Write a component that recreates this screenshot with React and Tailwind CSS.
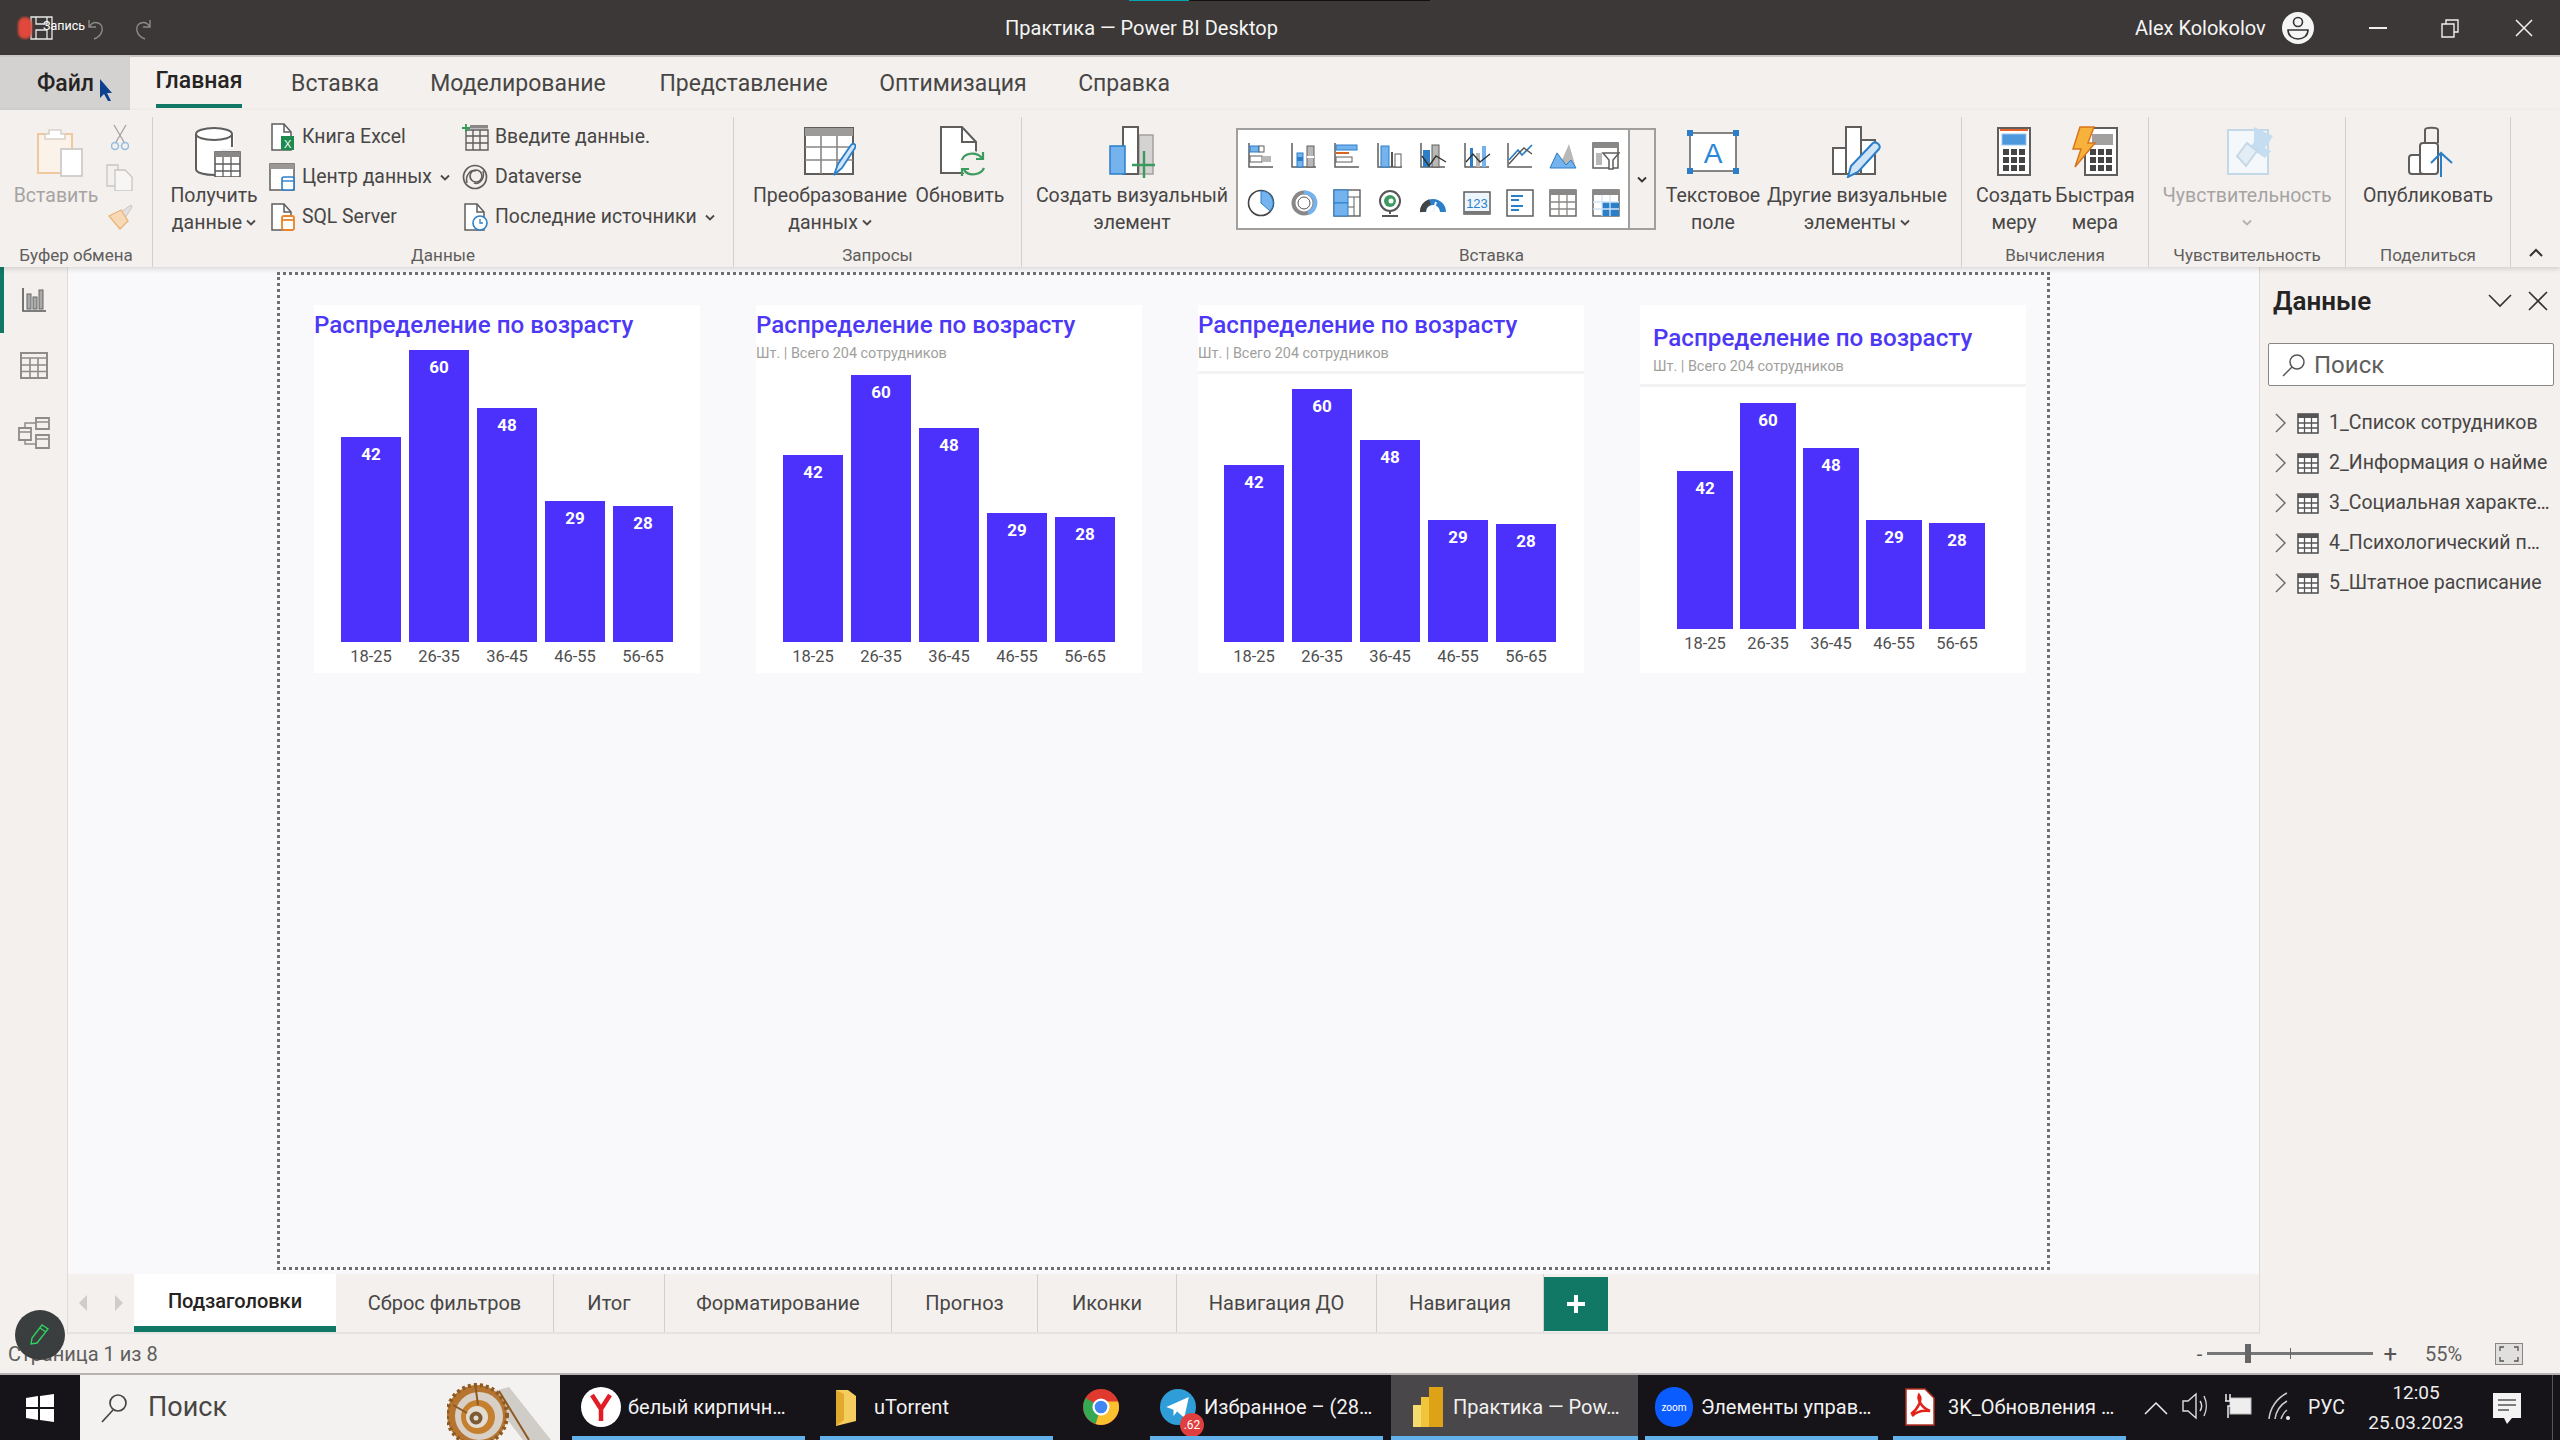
import React from "react";

const S = ({ w, h, vb, className = "", children }) => (
  <svg width={w} height={h} viewBox={vb || `0 0 ${w} ${h}`} fill="none" className={`shrink-0 ${className}`}>{children}</svg>
);
const G = "#5f5e5d", B = "#2b7fc9", L = "#74b3ee", A = "#b9b8b7";

const Chev = ({ c = "#4a4a4a", className = "" }) => (
  <S w={10} h={7} className={className}><path d="M1 1.5L5 5.5L9 1.5" stroke={c} strokeWidth="1.8" /></S>
);

/* small ribbon icons */
const FileBase = ({ children }) => (
  <S w={26} h={28}>
    <path d="M3 1H15L22 9V27H3Z" fill="#fff" stroke={G} strokeWidth="1.5" />
    <path d="M15 1V9H22" stroke={G} strokeWidth="1.5" />
    {children}
  </S>
);
const ExcelIcon = () => <FileBase><rect x="12" y="13" width="13" height="14" fill="#1d8a4e" /><text x="15" y="25" fontSize="11" fill="#fff" fontFamily="Liberation Sans">X</text></FileBase>;
const SqlIcon = () => <FileBase><rect x="13" y="13" width="12" height="14" rx="2" fill="#fff" stroke="#e8832a" strokeWidth="1.8" /><path d="M13 17H25" stroke="#e8832a" strokeWidth="1.8" /></FileBase>;
const RecentIcon = () => <FileBase><circle cx="18" cy="20" r="7" fill="#fff" stroke={B} strokeWidth="1.6" /><path d="M18 16V20H21" stroke={B} strokeWidth="1.3" /></FileBase>;
const HubIcon = () => (
  <S w={27} h={28}>
    <rect x="1" y="1" width="24" height="26" fill="#fff" stroke={G} strokeWidth="1.5" />
    <rect x="1" y="1" width="24" height="5" fill="#9a9896" />
    <rect x="13" y="14" width="12" height="13" rx="2" fill="#fff" stroke={B} strokeWidth="1.6" />
    <path d="M13 18H25" stroke={B} strokeWidth="1.4" />
  </S>
);
const EnterIcon = () => (
  <S w={27} h={27}>
    <path d="M4 6H26V26H4Z M4 12H26 M4 19H26 M11 6V26 M18 6V26" stroke={G} strokeWidth="1.4" />
    <rect x="8" y="1" width="18" height="3.5" fill="#8a8886" />
    <path d="M4 0V8M0 4H8" stroke="#2f9e57" strokeWidth="1.8" />
  </S>
);
const DataverseIcon = () => (
  <S w={26} h={26}>
    <circle cx="13" cy="13" r="11.5" stroke={G} strokeWidth="1.7" />
    <circle cx="14" cy="12" r="6" stroke={G} strokeWidth="1.7" />
    <path d="M5 19C3 12 8 5 14 7M21 7C23 14 18 21 12 19" stroke={G} strokeWidth="1.5" />
  </S>
);

/* large ribbon icons */
const Clipboard = () => (
  <S w={46} h={50}>
    <rect x="1" y="7" width="34" height="39" fill="#fbf3ea" stroke="#f0c89e" strokeWidth="2" />
    <path d="M12 7V3H24V7H28V12H8V7Z" fill="#fff" stroke="#d8d2cc" strokeWidth="1.6" />
    <rect x="24" y="22" width="21" height="27" fill="#fff" stroke="#c8c6c4" strokeWidth="1.6" />
  </S>
);
const GetData = () => (
  <S w={46} h={50}>
    <path d="M1 7V42C1 47 11 49 20 49H26V22H39V7" fill="#fff" />
    <path d="M1 7V42C1 46 10 48 20 48M37 7V20" stroke={G} strokeWidth="2" />
    <ellipse cx="19" cy="7" rx="18" ry="6" fill="#fff" stroke={G} strokeWidth="2" />
    <rect x="20" y="25" width="25" height="25" fill="#fff" stroke={G} strokeWidth="1.6" />
    <rect x="20" y="25" width="25" height="5" fill="#8a8886" />
    <path d="M20 37H45M20 44H45M28 30V50M36 30V50" stroke={G} strokeWidth="1.3" />
  </S>
);
const Transform = () => (
  <S w={52} h={50}>
    <rect x="1" y="1" width="48" height="46" fill="#fff" stroke={G} strokeWidth="2" />
    <rect x="1" y="1" width="48" height="8" fill="#9d9b99" />
    <path d="M1 20H49M1 33H49M17 9V47M33 9V47" stroke="#8a8886" strokeWidth="1.6" />
    <path d="M30 48L34 37L47 18C49 15 53 18 51 21L38 41Z" fill="#cfe4f7" stroke={B} strokeWidth="1.8" />
  </S>
);
const Refresh = () => (
  <S w={46} h={52}>
    <path d="M1 1H22L36 16V47H1Z" fill="#fff" stroke={G} strokeWidth="2" />
    <path d="M22 1V16H36" stroke={G} strokeWidth="2" />
    <circle cx="33" cy="38" r="13" fill="#f3f0ee" />
    <path d="M22 34C24 27 36 25 42 32M44 42C41 49 29 51 24 44" stroke="#3c9a5f" strokeWidth="2.2" />
    <path d="M43 26V33H36M22 50V43H29" stroke="#3c9a5f" strokeWidth="2.2" />
  </S>
);
const NewVisual = () => (
  <S w={46} h={52}>
    <rect x="30" y="9" width="14" height="39" fill="#d5d3d1" stroke="#a3a19f" strokeWidth="1.5" />
    <rect x="14" y="1" width="15" height="47" fill="#fff" stroke={G} strokeWidth="2" />
    <rect x="1" y="20" width="15" height="28" fill="#74b3ee" stroke={B} strokeWidth="1.5" />
    <path d="M35 25V52M23 39H48" stroke="#3c9a5f" strokeWidth="2.4" />
  </S>
);
const TextBox = () => (
  <S w={52} h={44}>
    <rect x="3" y="3" width="46" height="38" fill="#fff" stroke="#5f5e5d" strokeWidth="1.5" />
    {[[3, 3], [49, 3], [3, 41], [49, 41]].map(([x, y], i) => <rect key={i} x={x - 3} y={y - 3} width="6" height="6" fill={B} />)}
    <text x="26" y="33" textAnchor="middle" fontSize="28" fill="#2b88d8" fontFamily="Liberation Sans">A</text>
  </S>
);
const MoreVisuals = () => (
  <S w={50} h={52}>
    <rect x="1" y="22" width="15" height="26" fill="#fff" stroke={G} strokeWidth="2" />
    <rect x="14" y="1" width="15" height="47" fill="#fff" stroke={G} strokeWidth="2" />
    <rect x="29" y="14" width="14" height="34" fill="#fff" stroke={G} strokeWidth="2" />
    <path d="M16 51L19 40L40 18C43 14 50 19 47 23L26 46Z" fill="#cfe4f7" stroke={B} strokeWidth="2" />
  </S>
);
const Calc = ({ top = "#4c98dd" }) => (
  <S w={34} h={50}>
    <rect x="1" y="1" width="32" height="47" fill="#fff" stroke={G} strokeWidth="2" />
    <rect x="3" y="2" width="28" height="2" fill="#e8612a" />
    <rect x="5" y="7" width="24" height="11" fill={top} stroke="#9bc7ee" />
    {[22, 30, 38].map((y) => [6, 14, 22].map((x) => <rect key={x + "-" + y} x={x} y={y} width="6" height="6" fill="#444" />))}
  </S>
);
const Quick = () => (
  <S w={46} h={52}>
    <g transform="translate(12 1)"><rect x="1" y="1" width="32" height="47" fill="#fff" stroke={G} strokeWidth="2" />
      <rect x="8" y="7" width="21" height="11" fill="#a3a19f" />
      {[22, 30, 38].map((y) => [6, 14, 22].map((x) => <rect key={x + "-" + y} x={x} y={y} width="6" height="6" fill="#444" />))}</g>
    <path d="M8 1H22L16 17H23L3 41L9 23H1Z" fill="#f7b23b" stroke="#d9741e" strokeWidth="1.5" />
  </S>
);
const Sens = () => (
  <S w={48} h={52}>
    <rect x="1" y="4" width="40" height="44" fill="#f5f8fa" stroke="#c4d8e6" strokeWidth="2" />
    <path d="M27 1L46 10L38 22L44 25L38 32L23 22L27 16Z" fill="#c4ddf0" />
    <path d="M10 30L20 17L30 25L19 40Z" fill="#e2edf5" stroke="#c4d8e6" strokeWidth="2" />
  </S>
);
const Publish = () => (
  <S w={48} h={52}>
    <rect x="2" y="29" width="16" height="19" rx="3" fill="#fff" stroke={G} strokeWidth="2" />
    <rect x="13" y="17" width="18" height="31" rx="3" fill="#fff" stroke={G} strokeWidth="2" />
    <path d="M18 17V4C18 1 31 1 31 4V17" stroke={G} strokeWidth="2" />
    <path d="M34 51V28M24 37L34 27L45 37" stroke="#2b7fc9" strokeWidth="2" />
  </S>
);

/* gallery */
const Ax = () => <path d="M2 1V25H26" stroke={G} strokeWidth="1.5" />;
const GI = ({ children }) => <S w={28} h={28} vb="0 0 28 28">{children}</S>;
const gallery = [
  <GI key="1"><Ax /><rect x="3" y="4" width="9" height="6" fill={L} stroke={B} /><rect x="12" y="4" width="5" height="6" fill="#fff" stroke={G} /><rect x="3" y="14" width="12" height="6" fill="#fff" stroke={G} /><rect x="15" y="14" width="9" height="6" fill={A} /></GI>,
  <GI key="2"><Ax /><rect x="7" y="11" width="6" height="14" fill={L} stroke={B} /><rect x="7" y="15" width="6" height="4" fill={B} /><rect x="17" y="4" width="7" height="21" fill={A} stroke={G} /><rect x="17" y="14" width="7" height="2" fill="#fff" /></GI>,
  <GI key="3"><Ax /><rect x="3" y="3" width="21" height="5" fill={L} stroke={B} /><rect x="3" y="10" width="13" height="2" fill="#d9641f" /><rect x="3" y="15" width="16" height="5" fill="#fff" stroke={G} /></GI>,
  <GI key="4"><Ax /><rect x="5" y="4" width="8" height="21" fill={L} stroke={B} /><rect x="15" y="10" width="2" height="15" fill="#555" /><rect x="19" y="12" width="6" height="13" fill="#fff" stroke={G} /></GI>,
  <GI key="5"><Ax /><rect x="4" y="8" width="7" height="17" fill={B} /><rect x="13" y="3" width="7" height="22" fill={A} stroke={G} /><path d="M3 14L10 24L17 14L27 20" stroke="#333" strokeWidth="1.4" /></GI>,
  <GI key="6"><Ax /><rect x="7" y="6" width="3" height="19" fill={B} /><rect x="13" y="11" width="4" height="14" fill={A} /><rect x="19" y="4" width="4" height="21" fill={L} /><path d="M3 20L10 12L17 20L27 12" stroke="#333" strokeWidth="1.4" /></GI>,
  <GI key="7"><Ax /><path d="M3 18L12 8L16 13L26 3" stroke={B} strokeWidth="1.7" /><path d="M3 22L11 13L18 6L26 12" stroke="#555" strokeWidth="1.4" /></GI>,
  <GI key="8"><path d="M1 26L8 10L13 18L20 2L27 26Z" fill={A} /><path d="M1 26L8 11L17 23L22 18L27 26Z" fill={L} stroke={B} /></GI>,
  <GI key="9"><rect x="1" y="1" width="25" height="25" fill="#fff" stroke={G} strokeWidth="1.5" /><rect x="1" y="1" width="25" height="5" fill="#8a8886" /><rect x="4" y="11" width="6" height="12" fill={A} /><path d="M11 11H27L21 18V27L17 27V18Z" fill="#fff" stroke={G} strokeWidth="1.5" /></GI>,
  <GI key="10"><circle cx="14" cy="14" r="12.5" fill="#fff" stroke="#444" strokeWidth="1.6" /><path d="M14 2A12 12 0 0 1 23 22L14 14Z" fill={L} stroke={B} /></GI>,
  <GI key="11"><circle cx="14" cy="14" r="10.5" stroke="#8a8886" strokeWidth="4" /><path d="M14 3.5A10.5 10.5 0 0 1 18 24" stroke={L} strokeWidth="4" /><circle cx="14" cy="14" r="6" fill="#fff" stroke="#555" /></GI>,
  <GI key="12"><rect x="1" y="1" width="26" height="26" fill="#fff" stroke={G} strokeWidth="1.4" /><rect x="1" y="1" width="14" height="13" fill={L} stroke={B} /><rect x="1" y="14" width="14" height="13" fill={L} stroke={B} /><path d="M15 8H27M21 8V27M15 18H21" stroke={G} /></GI>,
  <GI key="13"><circle cx="14" cy="12" r="10" fill="#fff" stroke="#555" strokeWidth="2" /><circle cx="14" cy="12" r="6" fill="#3c9a5f" /><circle cx="15" cy="12" r="2.5" fill="#fff" /><path d="M14 22V25M6 27H22" stroke="#555" strokeWidth="2" /></GI>,
  <GI key="14"><path d="M4 23A10 10 0 0 1 24 23" stroke={B} strokeWidth="6" /><path d="M4 23A10 10 0 0 1 11 13" stroke="#444" strokeWidth="6" /><path d="M14 23L17 13" stroke="#f3f3f3" strokeWidth="2" /></GI>,
  <GI key="15"><rect x="1" y="3" width="26" height="22" fill="#eef6fd" stroke={G} strokeWidth="1.5" /><rect x="1" y="22" width="26" height="3" fill="#777" /><text x="14" y="19" textAnchor="middle" fontSize="13" fill={B} fontFamily="Liberation Sans">123</text></GI>,
  <GI key="16"><rect x="1" y="1" width="26" height="26" fill="#fff" stroke={G} strokeWidth="1.5" /><path d="M5 7H17M5 11H13M5 17H17M5 21H13" stroke={B} strokeWidth="2" /></GI>,
  <GI key="17"><rect x="1" y="1" width="26" height="26" fill="#fff" stroke={G} strokeWidth="1.4" /><rect x="1" y="1" width="26" height="5" fill="#8a8886" /><path d="M1 13H27M1 20H27M10 6V27M18 6V27" stroke="#8a8886" strokeWidth="1.3" /></GI>,
  <GI key="18"><rect x="1" y="1" width="26" height="26" fill="#fff" stroke={G} strokeWidth="1.4" /><rect x="1" y="1" width="26" height="5" fill="#8a8886" /><rect x="10" y="13" width="17" height="14" fill={B} /><path d="M1 13H27M1 20H27M10 6V27M18 6V27" stroke="#cfe4f7" strokeWidth="1.3" /></GI>,
];

const Large = ({ icon, lines, w, chev, gray, extraChev, iconPl = "" }) => (
  <div className={`flex flex-col items-center ${w}`}>
    <div className={`h-[50px] flex items-center justify-center ${iconPl}`}>{icon}</div>
    <div className={`mt-[5px] text-[19.5px] leading-[27px] text-center whitespace-nowrap ${gray ? "text-[#a6a4a2]" : "text-[#484644]"}`}>
      {lines.map((l, i) => (
        <div key={i} className="flex items-center justify-center gap-[4px] h-[27px]">
          {l}{chev && i === lines.length - 1 && <Chev />}
        </div>
      ))}
      {extraChev && <div className="flex items-center justify-center h-[27px]"><Chev c="#b5b3b1" /></div>}
    </div>
  </div>
);

const Group = ({ label, w, children }) => (
  <div className={`${w} h-[150px] flex flex-col shrink-0 border-r border-[#d2d0ce]`}>
    <div className="flex-1 flex items-start pt-[10px]">{children}</div>
    <div className="h-[24px] leading-[24px] text-center text-[17px] text-[#5f5d5b] whitespace-nowrap">{label}</div>
  </div>
);

const SmallBtn = ({ icon, label, chev }) => (
  <div className="flex items-center h-[40px] whitespace-nowrap text-[19.4px] text-[#484644]">
    <div className="w-[33px] flex justify-start">{icon}</div>
    <span>{label}</span>
    {chev && <Chev className="ml-[8px]" />}
  </div>
);

const Chart = ({ unit, barW, gap, pl, label }) => {
  const data = [["18-25", 42], ["26-35", 60], ["36-45", 48], ["46-55", 29], ["56-65", 28]];
  return (
    <div className={`flex items-end ${pl} ${gap}`}>
      {data.map(([k, v]) => (
        <div key={k} className={`${barW} flex flex-col items-center`}>
          <div className="w-full bg-[#4c31fd] text-white text-[17px] font-bold text-center leading-[24px] pt-[5px]" style={{ height: Math.round(v * unit) }}>{v}</div>
          <div className={`${label} whitespace-nowrap text-[16.5px] text-[#505050] flex items-center`}>{k}</div>
        </div>
      ))}
    </div>
  );
};

const Card = ({ sub, sep = "", topPad, titlePl = "", chart, bottomPad = "" }) => (
  <div className={`w-[386px] h-[368px] bg-white flex flex-col justify-between shrink-0 ${bottomPad}`}>
    <div className={`${topPad} ${titlePl} ${sep}`}>
      <div className="text-[#4d38f5] text-[24.2px] font-medium leading-[30px] whitespace-nowrap">Распределение по возрасту</div>
      {sub && <div className="text-[#a19f9d] text-[14.4px] leading-[20px] mt-[4px] whitespace-nowrap">Шт. | Всего 204 сотрудников</div>}
    </div>
    {chart}
  </div>
);

const Tab = ({ children, active, w }) => (
  <div className={`${w} shrink-0 h-full flex items-center justify-center text-[20px] whitespace-nowrap ${active ? "bg-white text-[#252423] font-medium border-b-[6px] border-[#117865] pt-[2px]" : "text-[#484644] border-r border-[#d2d0ce]"}`}>{children}</div>
);

const TableGlyph = () => (
  <S w={22} h={21}>
    <rect x="1" y="1" width="20" height="19" fill="#fff" stroke="#555" strokeWidth="1.6" />
    <rect x="1" y="1" width="20" height="4" fill="#555" />
    <path d="M1 10H21M1 15H21M7.5 5V20M14.5 5V20" stroke="#555" strokeWidth="1.3" />
  </S>
);

const TaskItem = ({ w, icon, label, active, line = true, ml, iconW = "w-[38px]" }) => (
  <div className={`${w} ${ml} shrink-0 h-full relative flex items-center pb-[1px] text-[20px] text-[#f2f2f2] whitespace-nowrap ${active ? "bg-[#4a474a]" : ""}`}>
    <div className={`${iconW} flex justify-center shrink-0`}>{icon}</div>
    {label && <span className="ml-[8px]">{label}</span>}
    {line && <div className="absolute left-0 right-0 bottom-0 h-[4px] bg-[#63b1ea]" />}
  </div>
);

const Shell = () => (
  <S w={108} h={65} vb="0 0 108 65">
    <path d="M40 18L76 65H104L62 12Z" fill="#d0cdc8" />
    <circle cx="30" cy="40" r="30" fill="#b5742f" stroke="#8d5a22" strokeWidth="4" strokeDasharray="3 3" />
    <circle cx="32" cy="41" r="24" fill="#d8d0c6" />
    <circle cx="31" cy="42" r="17" fill="#c4802f" />
    <circle cx="30" cy="42" r="11" fill="#e3dcd2" />
    <circle cx="29" cy="43" r="6.5" fill="#7c5a34" />
    <circle cx="29" cy="43" r="2.5" fill="#e3dcd2" />
    <path d="M52 16L82 65M28 8L31 30M6 30L20 38" stroke="#8d5a22" strokeWidth="2" />
  </S>
);

const tables = ["1_Список сотрудников", "2_Информация о найме", "3_Социальная характе…", "4_Психологический п…", "5_Штатное расписание"];

export default function App() {
  return (
    <div className="w-[2560px] h-[1440px] overflow-hidden flex flex-col relative bg-[#f3f0ee] font-['Roboto',sans-serif]">
      {/* title bar */}
      <div className="h-[57px] shrink-0 bg-[#3b3837] border-b-2 border-[#c9c7c5] flex items-center text-[#f5f5f5] relative">
        <div className="w-[14px] h-[22px] rounded-full bg-[#e0483c] ml-[18px] blur-[1px]" />
        <S w={26} h={26} className="-ml-[4px]"><path d="M3 2H24V24H3Z M8 24V15H19V24 M8 2V9H19V2" stroke="#e8e8e8" strokeWidth="1.3" /></S>
        <span className="absolute left-[43px] top-[17px] text-[12.5px] text-white">Запись</span>
        <S w={20} h={26} className="ml-[32px]"><path d="M3 5V12H10M3 12C8 4 18 8 16 16C15 20 11 23 8 24" stroke="#8d8b8a" strokeWidth="1.4" /></S>
        <S w={20} h={26} className="ml-[27px]"><path d="M17 5V12H10M17 12C12 4 2 8 4 16C5 20 9 23 12 24" stroke="#8d8b8a" strokeWidth="1.4" /></S>
        <div className="ml-[852px] text-[20px] whitespace-nowrap w-[1130px]">Практика — Power BI Desktop</div>
        <span className="text-[20px] whitespace-nowrap w-[146px]">Alex Kolokolov</span>
        <S w={34} h={34}><circle cx="17" cy="17" r="16" fill="#f5f5f5" /><circle cx="17" cy="11" r="4.5" stroke="#333" strokeWidth="1.6" /><path d="M7 19H27C27 31 7 31 7 19Z" stroke="#333" strokeWidth="1.6" /></S>
        <S w={18} h={4} className="ml-[54px]"><rect width="18" height="2" y="1" fill="#eee" /></S>
        <S w={20} h={20} className="ml-[53px]"><path d="M2 6H14V19H2Z M6 6V2H18V14H14" stroke="#eee" strokeWidth="1.4" /></S>
        <S w={18} h={18} className="ml-[55px]"><path d="M1 1L17 17M17 1L1 17" stroke="#eee" strokeWidth="1.6" /></S>
        <div className="absolute top-0 left-[1129px] w-[60px] h-[1px] bg-[#00a5b0]" />
        <div className="absolute top-0 left-[1189px] w-[241px] h-[1px] bg-[#111]" />
      </div>

      {/* tabs */}
      <div className="h-[53px] shrink-0 flex items-stretch text-[#484644] text-[23px] whitespace-nowrap">
        <div className="w-[130px] bg-[#d4d2d1] flex items-center pl-[37px] pt-[2px] font-medium text-[#252423] relative">Файл
          <S w={14} h={24} className="absolute left-[99px] top-[21px]"><path d="M1 1L13 15H8L12 23L9 23L5 16L1 20Z" fill="#0f3f8f" /></S>
        </div>
        <div className="ml-[26px] w-[86px] flex items-center justify-center border-b-4 border-[#117865] mb-[2px] pt-[2px] font-medium text-[#252423]">Главная</div>
        <div className="ml-[53px] w-[80px] pt-[2px] flex items-center justify-center">Вставка</div>
        <div className="ml-[55px] w-[176px] pt-[2px] flex items-center justify-center">Моделирование</div>
        <div className="ml-[56px] w-[163px] pt-[2px] flex items-center justify-center">Представление</div>
        <div className="ml-[55px] w-[146px] pt-[2px] flex items-center justify-center">Оптимизация</div>
        <div className="ml-[53px] w-[90px] pt-[2px] flex items-center justify-center">Справка</div>
      </div>

      {/* ribbon */}
      <div className="h-[157px] shrink-0 flex pt-[7px] relative z-10 shadow-[0_2px_5px_rgba(0,0,0,0.14)] bg-[#f3f0ee]">
        <Group label="Буфер обмена" w="w-[153px]">
          <Large icon={<Clipboard />} iconPl="pl-[8px]" lines={["Вставить"]} gray w="w-[96px] ml-[8px]" />
          <div className="flex flex-col items-center gap-[13px] ml-[2px] -mt-[3px]">
            <S w={18} h={27}><path d="M3 1L13 18M15 1L5 18" stroke="#a6a4a2" strokeWidth="1.3" /><circle cx="4" cy="22" r="3.5" stroke="#92bce0" strokeWidth="1.5" /><circle cx="14" cy="22" r="3.5" stroke="#92bce0" strokeWidth="1.5" /></S>
            <S w={27} h={27}><path d="M1 1H12V22H1Z" fill="#f3f0ee" stroke="#c8c6c4" strokeWidth="1.3" /><path d="M9 6H19L26 13V27H9Z" fill="#f7f6f5" stroke="#c8c6c4" strokeWidth="1.3" /></S>
            <S w={26} h={26}><path d="M14 8L24 1L25 3L18 14Z" fill="#e3e1df" stroke="#c8c6c4" /><path d="M2 12L14 6L21 17L13 25Z" fill="#f8d9b6" stroke="#eab27a" strokeWidth="1.3" /></S>
          </div>
        </Group>
        <Group label="Данные" w="w-[581px]">
          <Large icon={<GetData />} iconPl="pl-[8px]" lines={["Получить", "данные"]} chev w="w-[92px] ml-[15px]" />
          <div className="flex flex-col ml-[9px] -mt-[10px] w-[193px] shrink-0">
            <SmallBtn icon={<ExcelIcon />} label="Книга Excel" />
            <SmallBtn icon={<HubIcon />} label="Центр данных" chev />
            <SmallBtn icon={<SqlIcon />} label="SQL Server" />
          </div>
          <div className="flex flex-col -mt-[10px]">
            <SmallBtn icon={<EnterIcon />} label="Введите данные." />
            <SmallBtn icon={<DataverseIcon />} label="Dataverse" />
            <SmallBtn icon={<RecentIcon />} label="Последние источники" chev />
          </div>
        </Group>
        <Group label="Запросы" w="w-[288px]">
          <Large icon={<Transform />} lines={["Преобразование", "данных"]} chev w="w-[162px] ml-[15px]" />
          <Large icon={<Refresh />} iconPl="pl-[5px]" lines={["Обновить"]} w="w-[92px] ml-[3px]" />
        </Group>
        <Group label="Вставка" w="w-[940px]">
          <Large icon={<NewVisual />} lines={["Создать визуальный", "элемент"]} w="w-[188px] ml-[16px]" />
          <div className="w-[420px] h-[102px] ml-[10px] mt-[1px] bg-white border-2 border-[#a19f9d] flex shrink-0">
            <div className="flex-1 grid grid-cols-9 grid-rows-2 items-center justify-items-center pl-[1px] py-[2px]">{gallery}</div>
            <div className="w-[26px] border-l-2 border-[#a19f9d] bg-[#f3f0ee] flex items-center justify-center"><Chev c="#333" /></div>
          </div>
          <Large icon={<TextBox />} lines={["Текстовое", "поле"]} w="w-[94px] ml-[10px]" />
          <Large icon={<MoreVisuals />} lines={["Другие визуальные", "элементы"]} chev w="w-[178px] ml-[8px]" />
        </Group>
        <Group label="Вычисления" w="w-[187px]">
          <Large icon={<Calc />} lines={["Создать", "меру"]} w="w-[72px] ml-[16px]" />
          <Large icon={<Quick />} lines={["Быстрая", "мера"]} w="w-[76px] ml-[7px]" />
        </Group>
        <Group label="Чувствительность" w="w-[197px]">
          <Large icon={<Sens />} iconPl="pl-[8px]" lines={["Чувствительность"]} gray extraChev w="w-[164px] ml-[16px]" />
        </Group>
        <Group label="Поделиться" w="w-[165px]">
          <Large icon={<Publish />} iconPl="pl-[5px]" lines={["Опубликовать"]} w="w-[132px] ml-[16px]" />
        </Group>
        <div className="flex-1 flex items-end justify-center pb-[10px]"><S w={14} h={9}><path d="M1 8L7 2L13 8" stroke="#333" strokeWidth="2" /></S></div>
      </div>

      {/* main */}
      <div className="h-[1067px] shrink-0 flex min-h-0">
        <div className="w-[68px] shrink-0 flex flex-col items-center relative border-r border-[#dedcda]">
          <div className="absolute left-0 top-0 w-[4px] h-[66px] bg-[#117865]" />
          <S w={24} h={24} className="mt-[21px]"><path d="M1 0V23H24" stroke="#555" strokeWidth="1.6" /><rect x="5" y="6" width="4" height="15" fill="#aaa" stroke="#666" /><rect x="11" y="9" width="4" height="12" fill="#aaa" stroke="#666" /><rect x="17" y="2" width="4" height="19" fill="#aaa" stroke="#666" /></S>
          <S w={28} h={27} className="mt-[40px]"><rect x="1" y="1" width="26" height="25" stroke="#8e8c8a" strokeWidth="2" /><path d="M1 6H27M1 13H27M1 19.5H27M10 6V26M18 6V26" stroke="#8e8c8a" strokeWidth="1.6" /></S>
          <S w={32} h={32} className="mt-[38px]"><path d="M1 11H13V23H1Z M18 1H31V12H18Z M18 18H31V31H18Z" stroke="#8e8c8a" strokeWidth="1.8" /><path d="M1 15H13M18 5H31M18 22H31M7 11V6H18M7 23V27H18" stroke="#8e8c8a" strokeWidth="1.5" /></S>
        </div>
        <div className="flex-1 flex flex-col min-w-0">
          <div className="flex-1 bg-[#f9f8fa] pt-[5px] pl-[209px]">
            <div className="w-[1773px] h-[998px] border-[3px] border-dotted border-[#6f6e70] pl-[34px] pt-[30px] flex gap-[56px] items-start">
              <Card topPad="pt-[5px]" chart={<Chart unit={4.87} barW="w-[60px]" gap="gap-[8px]" pl="pl-[27px]" label="h-[31px]" />} />
              <Card sub topPad="pt-[5px]" chart={<Chart unit={4.45} barW="w-[60px]" gap="gap-[8px]" pl="pl-[27px]" label="h-[31px]" />} />
              <Card sub topPad="pt-[5px] pb-[7px]" sep="border-b-[3px] border-[#f3f2f2]" chart={<Chart unit={4.217} barW="w-[60px]" gap="gap-[8px]" pl="pl-[26px]" label="h-[31px]" />} />
              <Card sub topPad="pt-[18px] pb-[7px]" titlePl="pl-[13px]" sep="border-b-[3px] border-[#f3f2f2]" bottomPad="pb-[14px]" chart={<Chart unit={3.77} barW="w-[56px]" gap="gap-[7px]" pl="pl-[37px]" label="h-[30px]" />} />
            </div>
          </div>
          <div className="h-[60px] shrink-0 flex border-b-2 border-[#e6e4e2]">
            <div className="w-[66px] shrink-0 flex items-center justify-center gap-[26px]">
              <S w={10} h={18}><path d="M9 1L1 9L9 17Z" fill="#cfcdcb" /></S>
              <S w={10} h={18}><path d="M1 1L9 9L1 17Z" fill="#cfcdcb" /></S>
            </div>
            <Tab active w="w-[202px]">Подзаголовки</Tab>
            <Tab w="w-[218px]">Сброс фильтров</Tab>
            <Tab w="w-[111px]">Итог</Tab>
            <Tab w="w-[227px]">Форматирование</Tab>
            <Tab w="w-[146px]">Прогноз</Tab>
            <Tab w="w-[139px]">Иконки</Tab>
            <Tab w="w-[200px]">Навигация ДО</Tab>
            <Tab w="w-[167px]">Навигация</Tab>
            <div className="w-[64px] h-[54px] mt-[3px] bg-[#117865] flex items-center justify-center">
              <S w={18} h={18}><path d="M9 0V18M0 9H18" stroke="#fff" strokeWidth="4" /></S>
            </div>
          </div>
        </div>
        <div className="w-[301px] shrink-0 border-l border-[#dedcda] pt-[14px]">
          <div className="flex items-center h-[40px] pl-[13px]">
            <span className="text-[26px] font-semibold text-[#252423] w-[215px]">Данные</span>
            <S w={24} h={14}><path d="M1 1L12 12L23 1" stroke="#333" strokeWidth="1.6" /></S>
            <S w={20} h={20} className="ml-[16px]"><path d="M1 1L19 19M19 1L1 19" stroke="#333" strokeWidth="1.6" /></S>
          </div>
          <div className="ml-[8px] mt-[22px] w-[286px] h-[43px] bg-white border border-[#8a8886] rounded-[2px] flex items-center pl-[13px]">
            <S w={24} h={24}><circle cx="15" cy="9" r="7" stroke="#555" strokeWidth="1.5" /><path d="M10 14L1 23" stroke="#555" strokeWidth="1.5" /></S>
            <span className="ml-[8px] text-[24px] text-[#605e5c]">Поиск</span>
          </div>
          <div className="mt-[17px] flex flex-col">
            {tables.map((t) => (
              <div key={t} className="h-[40px] flex items-center pl-[15px] text-[19.5px] text-[#484644] whitespace-nowrap">
                <S w={12} h={20}><path d="M1 1L10 10L1 19" stroke="#666" strokeWidth="1.4" /></S>
                <div className="ml-[10px]"><TableGlyph /></div>
                <span className="ml-[10px]">{t}</span>
              </div>
            ))}
          </div>
        </div>
      </div>

      {/* status */}
      <div className="h-[39px] shrink-0 flex items-center text-[20px] text-[#605e5c] relative">
        <span className="ml-[8px] whitespace-nowrap">Страница 1 из 8</span>
        <div className="ml-auto flex items-center">
          <span className="text-[#555] mr-[5px]">-</span>
          <div className="w-[166px] h-[3px] bg-[#777] relative">
            <div className="absolute left-[38px] -top-[8px] w-[6px] h-[19px] bg-[#666]" />
            <div className="absolute left-[83px] -top-[4px] w-[1px] h-[11px] bg-[#666]" />
          </div>
          <span className="ml-[10px] text-[24px] leading-none text-[#555]">+</span>
          <span className="ml-[28px] w-[40px]">55%</span>
          <div className="ml-[30px] mr-[37px] w-[28px] h-[22px] bg-[#e1dfdd] border border-[#8a8886] flex items-center justify-center">
            <S w={20} h={16}><path d="M1 5V1H5M15 1H19V5M19 11V15H15M5 15H1V11" stroke="#555" strokeWidth="1.3" /></S>
          </div>
        </div>
        <div className="absolute left-[15px] -top-[24px] w-[50px] h-[50px] rounded-full bg-[#3b3e3e] flex items-center justify-center">
          <S w={20} h={24}><path d="M1 21L2 15L12 2L18 6L7 20Z M10 5L16 9" stroke="#2fd160" strokeWidth="1.4" /></S>
        </div>
      </div>

      {/* taskbar */}
      <div className="h-[67px] shrink-0 bg-[#161319] border-t-2 border-[#b5b3b1] flex items-stretch relative">
        <div className="w-[80px] flex items-center justify-center shrink-0">
          <S w={28} h={28}><path d="M0 4L12 2V13H0Z M14 2L28 0V13H14Z M0 15H12V26L0 24Z M14 15H28V28L14 26Z" fill="#fff" /></S>
        </div>
        <div className="w-[480px] bg-[#f3f2f1] flex items-center shrink-0 relative overflow-hidden">
          <S w={28} h={30} className="ml-[20px]"><circle cx="18" cy="10" r="8" stroke="#444" strokeWidth="1.7" /><path d="M13 17L2 29" stroke="#444" strokeWidth="1.7" /></S>
          <span className="ml-[20px] text-[27px] text-[#484644]">Поиск</span>
          <div className="absolute left-[367px] top-0"><Shell /></div>
        </div>
        <TaskItem ml="ml-[12px]" w="w-[233px]" icon={
          <S w={40} h={40}><circle cx="20" cy="20" r="20" fill="#fff" /><path d="M11 8L20 22L29 8M20 22V34" stroke="#e11e26" strokeWidth="4.5" /></S>
        } iconW="w-[48px] pl-[9px]" label="белый кирпичн…" />
        <TaskItem ml="ml-[15px]" w="w-[233px]" icon={
          <S w={26} h={38}><path d="M3 2H15L23 8V33L3 38Z" fill="#f5cd5e" /><path d="M3 2L11 6V32L3 38Z" fill="#e2a92f" /></S>
        } iconW="w-[46px] pl-[6px]" label="uTorrent" />
        <TaskItem ml="ml-[30px]" w="w-[36px]" line={false} icon={
          <S w={36} h={40} vb="0 0 40 40"><circle cx="20" cy="20" r="20" fill="#e03a2e" /><path d="M20 20L3 10A20 20 0 0 0 14 39Z" fill="#34a853" /><path d="M20 20L14 39A20 20 0 0 0 39 14H20Z" fill="#fbc02d" /><circle cx="20" cy="20" r="9.5" fill="#fff" /><circle cx="20" cy="20" r="7" fill="#4285f4" /></S>
        } iconW="w-[36px]" label="" />
        <TaskItem ml="ml-[31px]" w="w-[233px]" icon={
          <div className="relative"><S w={36} h={40} vb="0 0 40 40"><ellipse cx="20" cy="20" rx="20" ry="20" fill="#2f9ed8" /><path d="M7 20L32 9L27 32L19 25L15 30V23Z" fill="#fff" /></S>
            <div className="absolute -right-[8px] -bottom-[10px] w-[24px] h-[24px] rounded-full bg-[#e03f3f] text-white text-[12px] flex items-center justify-center">.62</div></div>
        } iconW="w-[46px] pl-[10px]" label="Избранное – (28…" />
        <TaskItem ml="ml-[8px]" w="w-[247px]" active icon={
          <S w={30} h={40}><rect x="0" y="18" width="11" height="22" fill="#f6dc6e" /><rect x="8" y="10" width="12" height="30" fill="#f1c53b" /><rect x="16" y="0" width="14" height="40" fill="#dda215" /></S>
        } iconW="w-[54px] pl-[20px]" label="Практика — Pow…" />
        <TaskItem ml="ml-[7px]" w="w-[233px]" icon={
          <div className="w-[38px] h-[40px] rounded-full bg-[#0b5cff] text-white text-[10px] flex items-center justify-center">zoom</div>
        } iconW="w-[48px] pl-[10px]" label="Элементы управ…" />
        <TaskItem ml="ml-[15px]" w="w-[233px]" icon={
          <S w={30} h={38}><path d="M1 1H20L29 10V37H1Z" fill="#fff" stroke="#b3301f" strokeWidth="1.5" /><path d="M6 26C12 22 18 12 14 7C12 12 17 20 25 23C18 22 11 24 7 28" stroke="#e2231a" strokeWidth="2.5" /></S>
        } iconW="w-[47px] pl-[6px]" label="3K_Обновления …" />
        <S w={24} h={14} className="ml-[18px] mt-[26px]"><path d="M1 13L12 2L23 13" stroke="#eee" strokeWidth="1.5" /></S>
        <S w={28} h={34} className="ml-[14px] mt-[14px]"><path d="M1 12H6L14 5V29L6 22H1Z M18 12C20 15 20 19 18 22 M22 7C25 13 25 21 22 27" stroke="#ddd" strokeWidth="1.4" /></S>
        <S w={28} h={26} className="ml-[14px] mt-[18px]"><rect x="6" y="5" width="21" height="16" fill="#eee" stroke="#bbb" /><path d="M2 1V8M6 1V8M1 8H7V13H4V25" stroke="#eee" strokeWidth="1.5" /></S>
        <S w={24} h={30} className="ml-[15px] mt-[16px]"><path d="M2 28C3 17 10 7 20 2M8 28C9 21 13 14 20 10M14 28C15 25 16 22 20 19" stroke="#ccc" strokeWidth="1.5" /><circle cx="21" cy="27" r="2" fill="#eee" /></S>
        <span className="ml-[17px] text-[19.5px] text-[#eee] self-center whitespace-nowrap">РУС</span>
        <div className="ml-[24px] w-[94px] flex flex-col items-center justify-center gap-[7px] text-[19px] leading-[23px] text-[#eee] whitespace-nowrap">
          <span>12:05</span><span>25.03.2023</span>
        </div>
        <S w={28} h={32} className="ml-[30px] mt-[18px]"><path d="M0 0H28V25H19L14 31L11 25H0Z" fill="#f3f3f3" /><path d="M5 7H23M5 12H23M5 17H16" stroke="#555" strokeWidth="1.6" /></S>
        <div className="absolute right-[7px] top-0 bottom-0 w-[1px] bg-[#555]" />
      </div>
    </div>
  );
}
